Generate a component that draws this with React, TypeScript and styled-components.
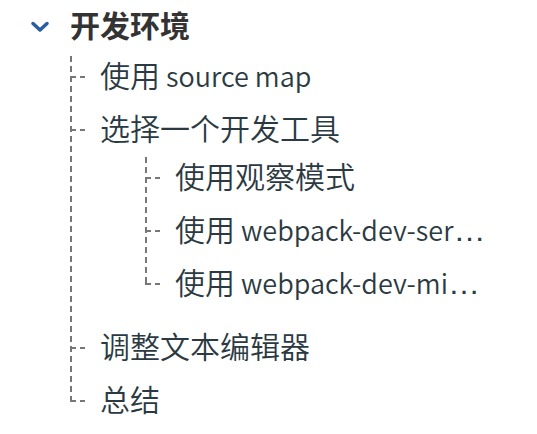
import React from "react";
import styled, { createGlobalStyle } from "styled-components";

const GlobalStyle = createGlobalStyle`
  body {
    margin: 0;
    background: #fff;
    font-family: "Noto Sans CJK SC", "Noto Sans", sans-serif;
    font-size: 30px;
    font-weight: 350;
    line-height: 36px;
    color: #2b3a42;
  }
`;

const Sidebar = styled.nav`
  padding: 6px 40px 0 30px;
`;

const Header = styled.div`
  display: flex;
  align-items: flex-start;
  height: 42px;
`;

const Toggle = styled.button`
  display: flex;
  align-items: center;
  flex: none;
  width: 40px;
  height: 42px;
  padding: 0;
  border: 0;
  background: none;
  cursor: pointer;
`;

const SectionLink = styled.a`
  color: #333;
  font-weight: 700;
  text-decoration: none;
`;

const Tree = styled.ul<{ $nested?: boolean }>`
  list-style: none;
  margin: ${(p) => (p.$nested ? "6px 0 0 45px" : "8px 0 0 40px")};
  padding: 0;
  background: repeating-linear-gradient(to bottom, #777 0 6px, transparent 6px 10px)
    no-repeat 0 0 / 2px calc(100% - 31px);
`;

const Item = styled.li`
  padding: 0 0 11px 30px;
  background: repeating-linear-gradient(to right, #777 0 6px, transparent 6px 10px)
    no-repeat 0 20px / 15px 2px;
`;

const ItemLink = styled.a`
  display: block;
  height: 42px;
  white-space: nowrap;
  color: inherit;
  text-decoration: none;
`;

const Latin = styled.span`
  font-size: 27px;
`;

const Ellipsis = styled.span`
  font-family: "Liberation Sans", sans-serif;
  font-size: 32px;
  line-height: 1px;
`;

type Entry = { title: string; latin?: string; more?: boolean; children?: Entry[] };

const entries: Entry[] = [
  { title: "使用", latin: "source map" },
  {
    title: "选择一个开发工具",
    children: [
      { title: "使用观察模式" },
      { title: "使用", latin: "webpack-dev-ser", more: true },
      { title: "使用", latin: "webpack-dev-mi", more: true },
    ],
  },
  { title: "调整文本编辑器" },
  { title: "总结" },
];

function Branch({ items, nested }: { items: Entry[]; nested?: boolean }) {
  return (
    <Tree $nested={nested}>
      {items.map((item) => (
        <Item key={item.title + (item.latin ?? "")}>
          <ItemLink href="#">
            {item.title}
            {item.latin && <Latin> {item.latin}</Latin>}
            {item.more && <Ellipsis>…</Ellipsis>}
          </ItemLink>
          {item.children && <Branch items={item.children} nested />}
        </Item>
      ))}
    </Tree>
  );
}

export default function App() {
  return (
    <>
      <GlobalStyle />
      <Sidebar lang="zh-CN">
        <Header>
          <Toggle type="button" aria-label="折叠" aria-expanded="true">
            <svg width="20" height="14" viewBox="0 0 20 14" fill="none">
              <path d="M3 3.5L10 10L17 3.5" stroke="#2a5d9f" strokeWidth="3.5" strokeLinecap="round" strokeLinejoin="round" />
            </svg>
          </Toggle>
          <SectionLink href="#">开发环境</SectionLink>
        </Header>
        <Branch items={entries} />
      </Sidebar>
    </>
  );
}
